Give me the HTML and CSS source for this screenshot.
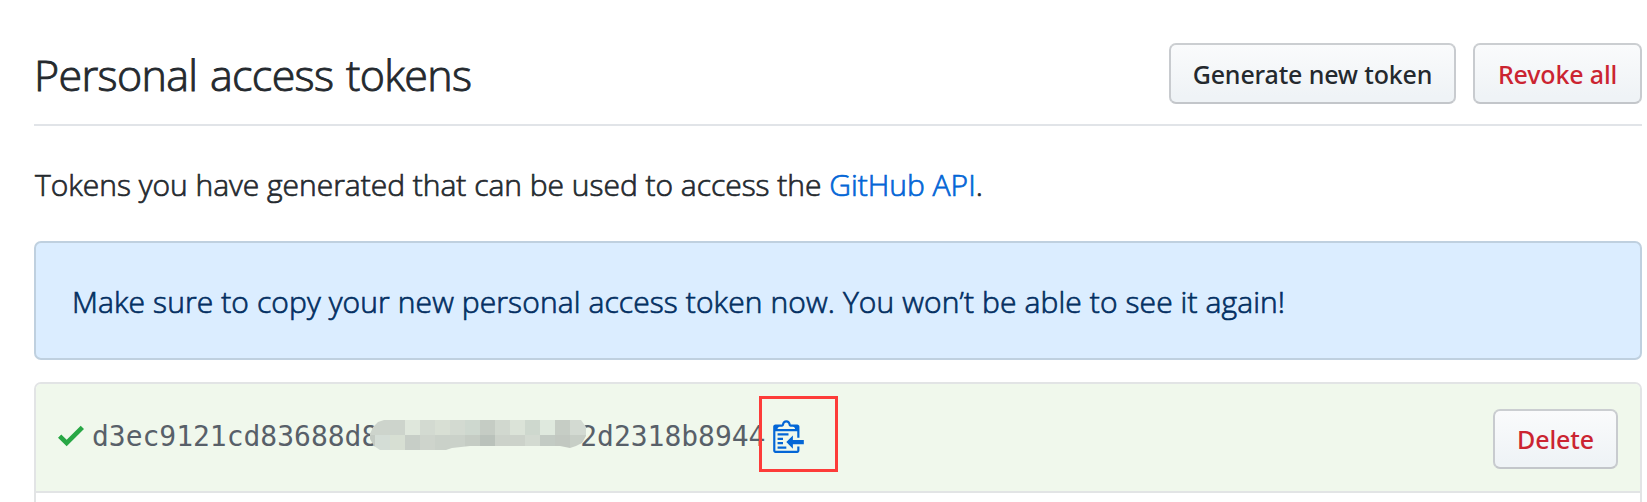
FILE: index.html
```html
<!DOCTYPE html>
<html lang="en">
<head>
<meta charset="utf-8">
<title>Personal access tokens</title>
<link rel="stylesheet" href="styles.css">
</head>
<body>
<main class="page">
  <header class="subhead">
    <h1 class="title">Personal access tokens</h1>
    <div class="actions">
      <button class="btn btn-generate">Generate new token</button>
      <button class="btn btn-danger btn-revoke">Revoke all</button>
    </div>
  </header>
  <p class="intro">Tokens you have generated that can be used to access the <a class="link" href="#">GitHub API</a>.</p>
  <div class="flash"><span class="flash-text">Make sure to copy your new personal access token now. You won’t be able to see it again!</span></div>
  <section class="list">
    <div class="row">
      <svg class="check" viewBox="0 0 12 16"><path d="M12 5l-8 8-4-4 1.5-1.5L4 10l6.5-6.5L12 5z"/></svg>
      <code class="token"><span>d3ec9121cd83688d8</span><span class="hidden-part"><svg class="mosaic" viewBox="0 0 216 30">
        <clipPath id="blob"><path d="M0 14L3 7 8 2 14 0H211L216 7V16L212 23 206 26 200 28 190 26H100L82 28 76 30H10L4 26 0 19Z"/></clipPath>
        <g clip-path="url(#blob)">
          <path fill="#cdd4cc" d="M0 0h35v15H0z"/><path fill="#dfe7dc" d="M35 0h15v15H35z"/><path fill="#d3dad1" d="M50 0h15v15H50z"/><path fill="#d8dfd4" d="M65 0h15v15H65z"/><path fill="#d3dad1" d="M80 0h15v15H80z"/><path fill="#ced8cf" d="M95 0h15v15H95z"/><path fill="#c5ccc4" d="M110 0h15v15h-15z"/><path fill="#d1d8cf" d="M125 0h15v15h-15z"/><path fill="#dbe3d8" d="M140 0h15v15h-15z"/><path fill="#ced8ce" d="M155 0h15v15h-15z"/><path fill="#dfe9de" d="M170 0h15v15h-15z"/><path fill="#c6cdc5" d="M185 0h15v15h-15z"/><path fill="#d3dad2" d="M200 0h16v15h-16z"/>
          <path fill="#c4cbc4" d="M0 15h5v15H0z"/><path fill="#d4ddd6" d="M5 15h15v15H5z"/><path fill="#d7dfd3" d="M20 15h15v15H20z"/><path fill="#c7cec7" d="M35 15h15v15H35z"/><path fill="#ced4cc" d="M50 15h15v15H50z"/><path fill="#cad1c9" d="M65 15h30v15H65z"/><path fill="#c5ccc4" d="M95 15h15v15H95z"/><path fill="#bac2bb" d="M110 15h15v15h-15z"/><path fill="#ccd2ca" d="M125 15h30v15h-30z"/><path fill="#d3dad1" d="M155 15h15v15h-15z"/><path fill="#c3cbc4" d="M170 15h15v15h-15z"/><path fill="#c2c8c1" d="M185 15h15v15h-15z"/><path fill="#c7cec6" d="M200 15h16v15h-16z"/>
        </g></svg></span><span>2d2318b8944</span></code>
      <span class="copy">
        <svg class="clippy" viewBox="0 0 14 16"><path fill-rule="evenodd" d="M2 13h4v1H2v-1zm5-6H2v1h5V7zm2 3V8l-3 3 3 3v-2h5v-2H9zM4.5 9H2v1h2.5V9zM2 12h2.5v-1H2v1zm9 1h1v2c-.02.28-.11.52-.3.7-.19.18-.42.28-.7.3H1c-.55 0-1-.45-1-1V4c0-.55.45-1 1-1h3c0-1.11.89-2 2-2 1.11 0 2 .89 2 2h3c.55 0 1 .45 1 1v5h-1V6H1v9h10v-2zM2 5h8c0-.55-.45-1-1-1H8c-.55 0-1-.45-1-1s-.45-1-1-1-1 .45-1 1-.45 1-1 1H3c-.55 0-1 .45-1 1z"/></svg>
        <span class="highlight"></span>
      </span>
      <button class="btn btn-danger btn-delete">Delete</button>
    </div>
    <div class="next-row"></div>
  </section>
</main>
</body>
</html>
```

FILE: styles.css
```css
* { box-sizing: border-box; }
html, body { margin: 0; height: 502px; overflow: hidden; background: #fff; }
body { color: #24292e; font-family: "Open Sans", "Noto Sans", sans-serif; font-weight: 300; }
.page { padding: 0 5px 0 34px; }
.subhead {
  display: flex; align-items: center; justify-content: space-between;
  height: 126px; padding-top: 23px; border-bottom: 2px solid #e1e4e8;
}
.title {
  margin: 2px 0 0; font-size: 43px; line-height: 60px; font-weight: 300; letter-spacing: -0.65px; word-spacing: 2px; white-space: nowrap;
  -webkit-text-stroke: 0.9px currentColor;
}
.actions { display: flex; gap: 17px; }
.btn {
  height: 61px; padding: 2px 0 0; border: 2px solid #c8cbcf; border-color: #cbced1 #c8cbcf #c3c6ca; border-radius: 7px;
  background: linear-gradient(#fafbfc, #eff3f6 90%);
  color: #24292e; font: 500 25px/55px "Noto Sans", "Open Sans", sans-serif; letter-spacing: -0.15px; white-space: nowrap;
}
.btn-danger { color: #cb2431; }
.btn-generate { width: 287px; }
.btn-revoke { width: 169px; }
.btn-delete { width: 125px; height: 60px; margin: 0 0 2px auto; padding-top: 1px; }
.intro {
  margin: 37px 0 0; height: 78px; padding-left: 1px; font-size: 30px; line-height: 44px; letter-spacing: -0.02px; white-space: nowrap;
  -webkit-text-stroke: 0.7px currentColor;
}
.link { color: #0366d6; text-decoration: none; }
.flash {
  display: flex; align-items: center; height: 119px; padding: 2px 0 0 36px;
  border: 2px solid #bfd0df; border-radius: 7px; background: #dbedff; color: #032f62;
  font-size: 30px; line-height: 44px; letter-spacing: 0.1px; white-space: nowrap;
  -webkit-text-stroke: 0.7px currentColor;
}
.list { margin-top: 22px; height: 140px; border: 2px solid #e2e4e5; border-radius: 7px; overflow: hidden; }
.row {
  display: flex; align-items: center; height: 109px; padding: 4px 22px 0;
  background: #f0f8ec; border-bottom: 2px solid #e2e4e5;
}
.check { width: 26px; height: 35px; margin-bottom: 8px; fill: #28a745; }
.token {
  display: flex; align-items: center; margin: 0 0 5px 8px; color: #586069;
  font: 28px/40px "DejaVu Sans Mono", monospace; letter-spacing: -0.02px;
}
.hidden-part { position: relative; width: 202px; height: 30px; }
.mosaic { position: absolute; left: -8px; top: -2px; width: 216px; height: 30px; }
.copy { position: relative; display: flex; margin: 0 0 9px 8px; }
.clippy { width: 31px; height: 35px; fill: #0366d6; }
.highlight { position: absolute; left: -14px; top: -22px; width: 79px; height: 76px; border: 3px solid #fd3c39; }
```
